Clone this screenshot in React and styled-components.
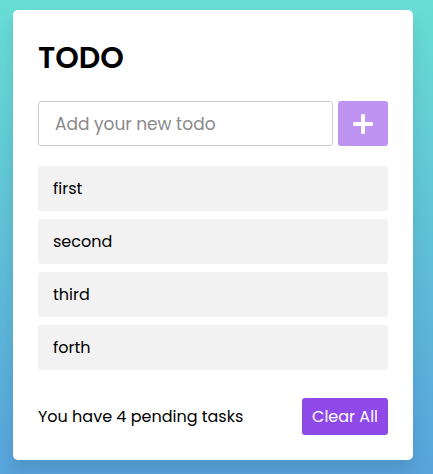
import React from "react";
import styled, { createGlobalStyle } from "styled-components";

const Global = createGlobalStyle`
  html, body { margin: 0; padding: 0; }
  body {
    min-height: 474px;
    background: linear-gradient(to bottom, #68ded3 0%, #58a3dc 100%);
    font-family: "Poppins", "Open Sans", "DejaVu Sans", sans-serif;
  }
  #root { padding: 10px 0 0 13px; }
`;

const Card = styled.div`
  width: 400px;
  box-sizing: border-box;
  background: #fff;
  border-radius: 5px;
  padding: 25px 25px 25px;
  box-shadow: 0 10px 15px rgba(0, 0, 0, 0.1);
`;

const Title = styled.h1`
  margin: 0 0 21px;
  font-size: 30px;
  font-weight: 600;
  line-height: 45px;
  color: #000;
`;

const InputRow = styled.div`
  display: flex;
  gap: 5px;
  height: 45px;
`;

const Input = styled.input`
  flex: 1;
  min-width: 0;
  box-sizing: border-box;
  height: 45px;
  border: 1px solid #ccc;
  border-radius: 3px;
  padding: 0 16px;
  font-family: inherit;
  font-size: 17px;
  outline: none;
  &::placeholder { color: #8a8a8a; }
`;

const AddButton = styled.button`
  width: 50px;
  height: 45px;
  border: none;
  border-radius: 3px;
  background: #bf93f1;
  display: flex;
  align-items: center;
  justify-content: center;
  padding: 0;
`;

const List = styled.ul`
  list-style: none;
  margin: 20px 0 0;
  padding: 0;
  display: flex;
  flex-direction: column;
  gap: 8px;
`;

const Item = styled.li`
  height: 45px;
  display: flex;
  align-items: center;
  padding: 0 15px;
  background: #f2f2f2;
  border-radius: 3px;
  font-size: 16px;
  color: #000;
`;

const Footer = styled.div`
  display: flex;
  align-items: center;
  justify-content: space-between;
  margin-top: 28px;
`;

const Pending = styled.span`
  font-size: 16px;
  color: #000;
`;

const ClearButton = styled.button`
  height: 37px;
  padding: 0 10px;
  border: none;
  border-radius: 3px;
  background: #8e49e8;
  color: #fff;
  font-family: inherit;
  font-size: 16px;
`;

const todos = ["first", "second", "third", "forth"];

export default function App() {
  return (
    <>
      <Global />
      <Card>
        <Title>TODO</Title>
        <InputRow>
          <Input placeholder="Add your new todo" />
          <AddButton aria-label="add">
            <svg width="20" height="20" viewBox="0 0 20 20">
              <rect x="8" y="0" width="4" height="20" rx="1.5" fill="#fff" />
              <rect x="0" y="8" width="20" height="4" rx="1.5" fill="#fff" />
            </svg>
          </AddButton>
        </InputRow>
        <List>
          {todos.map((t) => (
            <Item key={t}>{t}</Item>
          ))}
        </List>
        <Footer>
          <Pending>You have {todos.length} pending tasks</Pending>
          <ClearButton>Clear All</ClearButton>
        </Footer>
      </Card>
    </>
  );
}
